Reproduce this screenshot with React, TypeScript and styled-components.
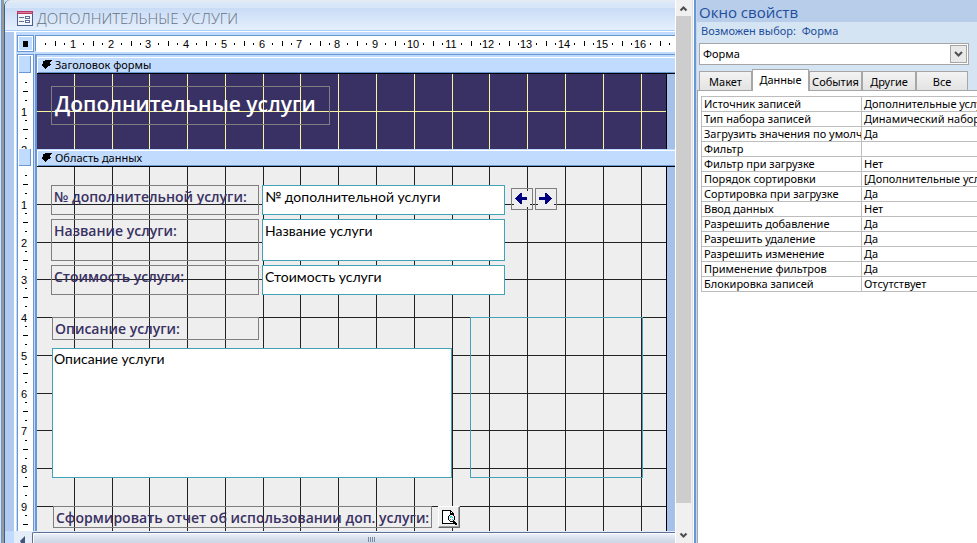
import React from "react";
import styled, { createGlobalStyle } from "styled-components";

const UI_FONT = '"Noto Sans", "Open Sans", sans-serif';
const LABEL_FONT = '"Open Sans", "Noto Sans", sans-serif';
const FIELD_FONT = 'Lato, "Open Sans", sans-serif';
const BLUE = "#6a97d4";
const LIGHT = "#c1dbff";

const GlobalStyle = createGlobalStyle`
  * { box-sizing: border-box; }
  body { margin: 0; font: 11px/15px ${UI_FONT}; color: #000; background: #fff; }
  h1, h2, p { margin: 0; font-weight: 400; }
  button, input, select, textarea { font: inherit; color: inherit; margin: 0; border-radius: 0; }
`;

/* ---------- shell ---------- */

const Workspace = styled.div`
  display: grid;
  grid-template-columns: minmax(0, 1fr) 281px;
  height: 100vh;
  min-height: 480px;
  overflow: hidden;
`;

const DesignerPane = styled.main`
  display: grid;
  grid-template-columns: minmax(0, 1fr) 20px;
  min-height: 0;
  background: #f0f0f0;
`;

const FormWindow = styled.section`
  display: flex;
  flex-direction: column;
  min-width: 0;
  min-height: 0;
  border-left: 1px solid #425d80;
  margin-left: 4px;
  border-top-left-radius: 6px;
  background: ${LIGHT};
`;

const WindowEdge = styled.div`
  display: flex;
  min-width: 0;
  min-height: 0;
  flex-direction: column;
  background: linear-gradient(90deg, #d5e3f3 0 1px, #6a97d4 1px 2px, #999 2px 4px, #d5e3f3 4px);
  border-right: 1px solid #fff;
  ${FormWindow} { flex: 1; }
`;

const TitleBar = styled.header`
  display: flex;
  align-items: center;
  flex: none;
  gap: 4px;
  height: 32px;
  padding: 5px 0 0 12px;
  border-bottom: 1px solid #fff;
  border-top-left-radius: 6px;
  background: linear-gradient(#e2eaf5 0 2px, #d7e6f8 4px 8px, #c9dcf6 8px, #e4effc 30px, #a8cdf8 30px);
`;

const FormTitle = styled.h1`
  font: 300 15px/20px ${LABEL_FONT};
  color: #68717f;
  white-space: nowrap;
`;

const DesignSurface = styled.div`
  flex: 1;
  min-height: 0;
  display: grid;
  grid-template-columns: 17px minmax(0, 1fr);
  grid-template-rows: 17px auto minmax(0, 1fr);
  column-gap: 1px;
  padding: 3px 0 0 12px;
  background: linear-gradient(90deg, #b1c9ef 0 9px, #fff 9px 11px, ${LIGHT} 11px);
`;

/* ---------- rulers ---------- */

const SelectorBox = styled.button`
  display: grid;
  place-items: center;
  padding: 0;
  border: 1px solid ${BLUE};
  background: ${LIGHT};
  box-shadow: inset 0 0 0 1px #fff;
`;

const TopRuler = styled.div`
  border: 1px solid ${BLUE};
  border-right: 0;
  border-bottom-color: #fff;
  background: #fff;
  overflow: hidden;
  svg { display: block; }
`;

const SideRuler = styled.div<{ $first?: boolean }>`
  display: flex;
  flex-direction: column;
  min-height: 0;
  overflow: hidden;
  margin-top: ${(p) => (p.$first ? 2 : 0)}px;
  padding-top: ${(p) => (p.$first ? 1 : 0)}px;
  border: solid ${BLUE};
  border-width: ${(p) => (p.$first ? "1px 1px 0" : "0 1px")};
  background: #fff;
  svg { display: block; flex: none; }
`;

const SectionHandle = styled.button`
  flex: none;
  height: 17px;
  margin: 0 2px 1px 1px;
  padding: 0;
  border: 1px solid ${BLUE};
  border-width: 0 1px 1px 0;
  background: ${LIGHT};
`;

const RulerNumber = styled.text`
  font: 11px "Liberation Sans", Arial, sans-serif;
  text-anchor: middle;
  fill: #000;
`;

const CM = 37.8;
const gridStop = (n: number) => Math.floor(CM * n - 0.6);

function HorizontalRuler({ units }: { units: number }) {
  return (
    <svg width={units * 38} height="15" shapeRendering="crispEdges" aria-hidden="true">
      {Array.from({ length: units }, (_, i) => {
        const from = Math.round(CM * i) - 1;
        return (
          <g key={i}>
            <rect x={from + 10} y="7" width="1" height="2" />
            <rect x={from + 20} y="5" width="1" height="5" />
            <rect x={from + 29} y="7" width="1" height="2" />
            {i < units - 1 && <RulerNumber x={gridStop(i + 1)} y="12">{i + 1}</RulerNumber>}
          </g>
        );
      })}
    </svg>
  );
}

function VerticalRuler({ units, height }: { units: number; height: number }) {
  return (
    <svg width="15" height={height} shapeRendering="crispEdges" aria-hidden="true">
      {Array.from({ length: units }, (_, i) => {
        const from = Math.round(CM * i) - 1;
        return (
          <g key={i}>
            <rect x="7" y={from + 9} width="2" height="1" />
            <rect x="5" y={from + 18} width="5" height="1" />
            <rect x="7" y={from + 27} width="2" height="1" />
            <RulerNumber x="6" y={gridStop(i + 1) + 5}>{i + 1}</RulerNumber>
          </g>
        );
      })}
    </svg>
  );
}

/* ---------- sections ---------- */

const Section = styled.section<{ $first?: boolean }>`
  display: flex;
  flex-direction: column;
  min-height: 0;
  overflow: hidden;
  margin-top: ${(p) => (p.$first ? 2 : 0)}px;
  border-left: 2px solid ${BLUE};
  border-top: ${(p) => (p.$first ? `1px solid ${BLUE}` : "0")};
  padding-top: ${(p) => (p.$first ? 1 : 0)}px;
`;

const SectionBar = styled.header`
  display: flex;
  align-items: center;
  flex: none;
  gap: 3px;
  height: 18px;
  padding: 0 0 0 5px;
  border-bottom: 1px solid #000;
  background: ${LIGHT};
  box-shadow: inset 0 1px ${LIGHT}, inset 1px 2px #fff, inset 0 -1px ${BLUE};
  white-space: nowrap;
  h2 { font-size: 11px; line-height: 15px; }
`;

const Canvas = styled.div<{ $tone: string }>`
  position: relative;
  flex: 0 0 630px;
  border-right: 1px solid #000;
  background: ${(p) => p.$tone};
`;

const CanvasBed = styled.div<{ $height: number }>`
  display: flex;
  flex: 1 0 ${(p) => p.$height}px;
  background: #a5c1e9;
`;

const GridLines = styled.svg<{ $line: string }>`
  position: absolute;
  inset: 0;
  width: 100%;
  height: 100%;
  fill: ${(p) => p.$line};
`;

function FormCanvas(props: { tone: string; line: string; height: number; rows: number; children: React.ReactNode }) {
  return (
    <CanvasBed $height={props.height}>
      <Canvas $tone={props.tone}>
        <GridLines $line={props.line} shapeRendering="crispEdges" aria-hidden="true">
          {Array.from({ length: 16 }, (_, i) => (
            <rect key={i} x={gridStop(i + 1)} y="0" width="1" height="100%" />
          ))}
          {Array.from({ length: props.rows }, (_, i) => (
            <rect key={i} x="0" y={gridStop(i + 1)} width="100%" height="1" />
          ))}
        </GridLines>
        {props.children}
      </Canvas>
    </CanvasBed>
  );
}

/* ---------- controls placed on the form canvas ---------- */

type Place = { $x: number; $y: number; $w: number; $h: number };

const Placed = styled.div<Place>`
  position: absolute;
  left: ${(p) => p.$x}px;
  top: ${(p) => p.$y}px;
  width: ${(p) => p.$w}px;
  height: ${(p) => p.$h}px;
`;

const HeaderLabel = styled(Placed)`
  padding: 1px 3px;
  border: 1px solid #7f7f7f;
  color: #fff;
  font: 600 21px/32px ${LABEL_FONT};
  white-space: nowrap;
`;

const FieldLabel = styled(Placed)`
  padding: 1px 2px;
  border: 1px solid #7f7f7f;
  color: #393163;
  font: 600 14px/20px ${LABEL_FONT};
  white-space: nowrap;
`;

const FieldBox = styled(Placed)`
  padding: 1px;
  border: 1px solid #44a2b6;
  background: #fff;
  font: 14px/18px ${FIELD_FONT};
  resize: none;
  outline: 0;
`;

const FieldInput = styled(FieldBox)`
  padding: 1px 2px ${(p) => p.$h - 22}px;
`;

const PictureFrame = styled(Placed)`
  border: 1px solid #44a2b6;
`;

const NavButton = styled(Placed)`
  display: grid;
  padding: 2px;
  border: 1px solid #7f7f7f;
  background: transparent;
  svg { display: block; width: 16px; height: 16px; background: #eee; fill: #000080; }
`;

const ReportButton = styled(Placed)`
  display: grid;
  place-items: center;
  padding: 0;
  border: 1px solid;
  border-color: #fff #696969 #696969 #fff;
  box-shadow: inset -1px -1px #a0a0a0;
  background: #eee;
`;

/* ---------- scroll bars ---------- */

const BottomScroll = styled.div`
  display: grid;
  grid-template-columns: 18px minmax(0, 1fr);
  flex: none;
  height: 12px;
  margin-left: 9px;
  border-top: 1px solid #e4eefb;
  background: #e5edf8;
`;

const ScrollArrow = styled.button`
  display: grid;
  place-items: center;
  padding: 0;
  border: 0;
  background: transparent;
  overflow: hidden;
`;

const LeftArrow = styled(ScrollArrow)`
  place-items: end center;
  padding-right: 2px;
`;

const BottomThumb = styled.div`
  display: flex;
  justify-content: center;
  align-items: flex-end;
  padding: 0 0 1px 36px;
  border: 1px solid #5a6f92;
  border-width: 1px 0 0 1px;
  border-top-left-radius: 2px;
  box-shadow: inset 1px 1px #fff;
  background: linear-gradient(#eef3f9, #d3dcea 70%, #ccd6e6);
`;

const SideScroll = styled.div`
  display: flex;
  flex-direction: column;
  background: #f0f0f0;
  border-right: 2px solid ${BLUE};
  box-shadow: inset -1px 0 #fff, inset -2px 0 #dde3ec;
`;

const SideArrow = styled(ScrollArrow)`
  width: 15px;
  height: 16px;
`;

const SideThumb = styled.div`
  flex: 1;
  width: 15px;
  background: #cdcdcd;
`;

const SideTrack = styled.div`
  height: 24px;
`;

/* ---------- property sheet ---------- */

const PropertySheet = styled.aside`
  display: flex;
  flex-direction: column;
  min-width: 0;
  border-left: 1px solid #c5d6ec;
  background: #d5e4f3;
`;

const SheetTitle = styled.h2`
  flex: none;
  height: 22px;
  padding: 1px 2px 0;
  background: #b8cde9;
  color: #1e4e9c;
  font: 400 15px/22px ${LABEL_FONT};
`;

const SheetHint = styled.p`
  flex: none;
  height: 21px;
  padding: 1px 4px;
  color: #1e4e9c;
  white-space: pre;
`;

const ObjectPicker = styled.label`
  position: relative;
  display: block;
  flex: none;
  height: 22px;
  margin: 0 8px 4px 2px;
  svg { position: absolute; right: 2px; top: 2px; pointer-events: none; }
`;

const PickerSelect = styled.select`
  appearance: none;
  display: block;
  width: 100%;
  height: 22px;
  padding: 0 20px 2px 3px;
  border: 1px solid #a6a6a6;
  background: #fff;
`;

const TabStrip = styled.div`
  display: grid;
  grid-template-columns: 53px 57px 53px 54px 52px;
  align-items: end;
  flex: none;
  height: 21px;
  margin-left: 2px;
`;

const Tab = styled.button<{ $active?: boolean }>`
  position: relative;
  height: ${(p) => (p.$active ? 22 : 19)}px;
  margin-bottom: ${(p) => (p.$active ? -1 : 0)}px;
  padding: 0 0 ${(p) => (p.$active ? 3 : 0)}px;
  border: 1px solid #a6a6a6;
  border-bottom: 0;
  background: ${(p) => (p.$active ? "#fff" : "linear-gradient(#f3f3f3, #e3e3e3)")};
  white-space: nowrap;
`;

const SheetBody = styled.div`
  flex: 1;
  min-height: 0;
  overflow: hidden;
  padding: 5px 0 0 3px;
  border: 1px solid #a6a6a6;
  border-width: 1px 0 0 1px;
  background: #fff;
`;

const PropertyTable = styled.table`
  width: 100%;
  border-collapse: collapse;
  table-layout: fixed;
  line-height: 14px;
  th, td {
    height: 15px;
    padding: 0 0 0 2px;
    border: 1px solid #bdbdbd;
    font-weight: 400;
    text-align: left;
    white-space: nowrap;
    overflow: hidden;
  }
  th { width: 160px; }
  td { border-right: 0; }
`;

const TABS = ["Макет", "Данные", "События", "Другие", "Все"];

const PROPERTIES = [
  ["Источник записей", "Дополнительные услуги"],
  ["Тип набора записей", "Динамический набор"],
  ["Загрузить значения по умолчанию", "Да"],
  ["Фильтр", ""],
  ["Фильтр при загрузке", "Нет"],
  ["Порядок сортировки", "[Дополнительные услуги]"],
  ["Сортировка при загрузке", "Да"],
  ["Ввод данных", "Нет"],
  ["Разрешить добавление", "Да"],
  ["Разрешить удаление", "Да"],
  ["Разрешить изменение", "Да"],
  ["Применение фильтров", "Да"],
  ["Блокировка записей", "Отсутствует"],
];

/* ---------- icons ---------- */

const FormIcon = () => (
  <svg width="16" height="15" viewBox="0 0 16 15" shapeRendering="crispEdges" aria-hidden="true">
    <rect x="0" y="0" width="16" height="15" fill="#4c5f8c" />
    <rect x="1" y="3" width="14" height="11" fill="#f3f5fa" />
    <rect x="0" y="0" width="16" height="3" fill="#bd3a68" />
    <rect x="1" y="1" width="14" height="1" fill="#d87998" />
    <path d="M2 6h5v1h-5zM2 10h5v1h-5z" fill="#5e6f96" />
    <path d="M8 5h5v3h-5zM8 9h5v3h-5z" fill="#5e6f96" />
    <path d="M9 6h3v1h-3zM9 10h3v1h-3z" fill="#fff" />
  </svg>
);

const SectionArrow = () => (
  <svg width="10" height="9" viewBox="0 0 10 9" shapeRendering="crispEdges" aria-hidden="true">
    <path d="M3 0h7v1h-1v1h-1v2h1v1h-1v1h-2v1h-1v1h-1v1h-1v-1h-1v-1h-1v-1h-1v-1h-1v-1h2v-3h1z" />
  </svg>
);

const NavArrow = ({ next }: { next?: boolean }) => (
  <svg viewBox="0 0 16 16" shapeRendering="crispEdges" aria-hidden="true">
    {next ? (
      <path d="M7 2h2v1h1v1h1v1h1v1h1v1h1v1h-1v1h-1v1h-1v1h-1v1h-1v1h-2v-4h-6v-3h6z" />
    ) : (
      <path d="M8 2h-2v1h-1v1h-1v1h-1v1h-1v1h-1v1h1v1h1v1h1v1h1v1h1v1h2v-4h5v-3h-5z" />
    )}
  </svg>
);

const PreviewIcon = () => (
  <svg width="17" height="17" viewBox="0 0 17 17" shapeRendering="crispEdges" aria-hidden="true">
    <path d="M1 1h9v1h1v1h1v1h1v11h-12z" fill="#000" />
    <path d="M2 2h7v3h3v9h-10z" fill="#fff" />
    <path d="M10 3h1v1h-1z" fill="#fff" />
    <path d="M9 5h3v1h1v1h1v4h-1v1h1v1h1v1h1v2h-2v-1h-1v-1h-1v-1h-3v-1h-1v-1h-1v-4h1v-1h1z" fill="#000" />
    <path d="M9 6h3v1h1v4h-1v1h-3v-1h-1v-4h1z" fill="#e8f2f2" />
    <path d="M9 7h2v1h-1v1h-1zM11 10h1v1h-1z" fill="#22dbe0" />
    <path d="M11 8h1v1h-1zM9 10h1v1h-1z" fill="#8a8a8a" />
  </svg>
);

const Chevron = ({ up }: { up?: boolean }) => (
  <svg width="9" height="7" viewBox="0 0 9 7" aria-hidden="true">
    <path d={up ? "M1.5 5.5L4.5 2.5L7.5 5.5" : "M1.5 1.5L4.5 4.5L7.5 1.5"} fill="none" stroke="#505050" strokeWidth="2.2" />
  </svg>
);

/* ---------- page ---------- */

const FIELDS = [
  { id: "number", text: "№ дополнительной услуги", y: 18, h: 30 },
  { id: "name", text: "Название услуги", y: 52, h: 42 },
  { id: "price", text: "Стоимость услуги", y: 98, h: 30 },
];

export default function App() {
  return (
    <>
      <GlobalStyle />
      <Workspace>
        <DesignerPane>
          <WindowEdge>
            <FormWindow>
              <TitleBar>
                <FormIcon />
                <FormTitle>ДОПОЛНИТЕЛЬНЫЕ УСЛУГИ</FormTitle>
              </TitleBar>
              <DesignSurface>
                <SelectorBox aria-label="Выделить форму">
                  <svg width="5" height="6" aria-hidden="true"><rect width="5" height="6" /></svg>
                </SelectorBox>
                <TopRuler><HorizontalRuler units={17} /></TopRuler>

                <SideRuler $first>
                  <SectionHandle aria-label="Выделить заголовок формы" />
                  <VerticalRuler units={2} height={75} />
                </SideRuler>
                <Section $first>
                  <SectionBar><SectionArrow /><h2>Заголовок формы</h2></SectionBar>
                  <FormCanvas tone="#393163" line="#f8f4a0" height={75} rows={1}>
                    <HeaderLabel $x={14} $y={12} $w={279} $h={39}>Дополнительные услуги</HeaderLabel>
                  </FormCanvas>
                </Section>

                <SideRuler>
                  <SectionHandle aria-label="Выделить область данных" />
                  <VerticalRuler units={10} height={364} />
                </SideRuler>
                <Section>
                  <SectionBar><SectionArrow /><h2>Область данных</h2></SectionBar>
                  <FormCanvas tone="#eee" line="#222" height={364} rows={9}>
                    {FIELDS.map((f) => (
                      <React.Fragment key={f.id}>
                        <FieldLabel as="label" htmlFor={f.id} $x={14} $y={f.y} $w={208} $h={f.h}>{f.text}:</FieldLabel>
                        <FieldInput as="input" id={f.id} defaultValue={f.text} $x={225} $y={f.y} $w={243} $h={f.h} />
                      </React.Fragment>
                    ))}
                    <NavButton as="button" aria-label="Предыдущая запись" $x={474} $y={21} $w={22} $h={22}><NavArrow /></NavButton>
                    <NavButton as="button" aria-label="Следующая запись" $x={498} $y={21} $w={22} $h={22}><NavArrow next /></NavButton>
                    <FieldLabel as="label" htmlFor="about" $x={15} $y={150} $w={207} $h={23}>Описание услуги:</FieldLabel>
                    <FieldBox as="textarea" id="about" defaultValue="Описание услуги" $x={15} $y={181} $w={400} $h={130} />
                    <PictureFrame $x={433} $y={150} $w={173} $h={161} />
                    <FieldLabel as="label" htmlFor="report" $x={16} $y={339} $w={379} $h={22}>Сформировать отчет об использовании доп. услуги:</FieldLabel>
                    <ReportButton as="button" id="report" $x={401} $y={339} $w={22} $h={22}><PreviewIcon /></ReportButton>
                  </FormCanvas>
                </Section>
              </DesignSurface>
              <BottomScroll>
                <LeftArrow aria-label="Прокрутить влево">
                  <svg width="5" height="7" aria-hidden="true"><path d="M5 0v7H1L0 5z" fill="#3f557d" /></svg>
                </LeftArrow>
                <BottomThumb>
                  <svg width="8" height="5" shapeRendering="crispEdges" aria-hidden="true">
                    <path d="M0 0h1v5h-1zM2 0h1v5h-1zM4 0h1v5h-1zM6 0h1v5h-1z" fill="#7c8aa3" />
                  </svg>
                </BottomThumb>
              </BottomScroll>
            </FormWindow>
          </WindowEdge>
          <SideScroll>
            <SideArrow aria-label="Прокрутить вверх"><Chevron up /></SideArrow>
            <SideThumb />
            <SideTrack />
            <SideArrow aria-label="Прокрутить вниз"><Chevron /></SideArrow>
          </SideScroll>
        </DesignerPane>

        <PropertySheet>
          <SheetTitle>Окно свойств</SheetTitle>
          <SheetHint>{"Возможен выбор:  Форма"}</SheetHint>
          <ObjectPicker>
            <PickerSelect aria-label="Объект" defaultValue="form"><option value="form">Форма</option></PickerSelect>
            <svg width="17" height="18" aria-hidden="true">
              <rect x="0.5" y="0.5" width="16" height="17" fill="#e9e9e9" stroke="#a6a6a6" />
              <path d="M5 7L8.5 10.5L12 7" fill="none" stroke="#505050" strokeWidth="2" />
            </svg>
          </ObjectPicker>
          <TabStrip role="tablist">
            {TABS.map((name, i) => (
              <Tab key={name} role="tab" aria-selected={i === 1} $active={i === 1}>{name}</Tab>
            ))}
          </TabStrip>
          <SheetBody>
            <PropertyTable>
              <tbody>
                {PROPERTIES.map(([name, value]) => (
                  <tr key={name}><th scope="row">{name}</th><td>{value}</td></tr>
                ))}
              </tbody>
            </PropertyTable>
          </SheetBody>
        </PropertySheet>
      </Workspace>
    </>
  );
}
